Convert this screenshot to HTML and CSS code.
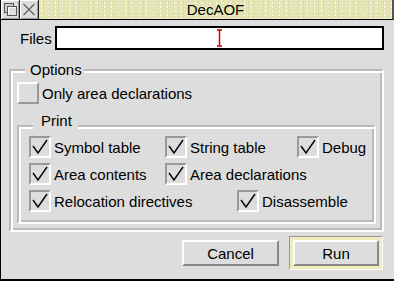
FILE: index.html
```html
<!DOCTYPE html>
<html lang="en">
<head>
  <meta charset="UTF-8">
  <title>DecAOF</title>
  <link rel="stylesheet" href="styles.css">
</head>
<body>

  <div class="window">
    <div class="titlebar">
      <span class="tool">
        <svg viewBox="0 0 18 19" width="18" height="19">
          <rect x="3.5" y="3.5" width="9" height="9" fill="#ccc" stroke="#555"/>
          <rect x="6.5" y="6.5" width="9" height="9" fill="#ddd" stroke="#555"/>
          <path d="M7.5 14.5v-7h7" fill="none" stroke="#fff"/>
        </svg>
      </span>
      <span class="tool">
        <svg viewBox="0 0 18 19" width="18" height="19">
          <path d="M3.5 4l11 11M14.5 4l-11 11" stroke="#666" stroke-width="1.4"/>
        </svg>
      </span>
      <div class="title">DecAOF</div>
    </div>

    <div class="pane">
      <div class="files-row">
        <span class="files-label">Files</span>
        <div class="field">
          <svg class="caret" viewBox="0 0 5 18" width="5" height="18">
            <path d="M0 1h5M2.5 1v16M0 17h5" stroke="#d00" stroke-width="1.5"/>
          </svg>
        </div>
      </div>

      <fieldset class="frame options">
        <legend>Options</legend>
        <label class="opt"><span class="box"></span>Only area declarations</label>

        <fieldset class="frame print">
          <legend>Print</legend>
          <div class="print-grid">
            <label class="opt"><span class="box on"><svg viewBox="0 0 18 18"><path d="M2 8l5 7 9-13"/></svg></span>Symbol table</label>
            <label class="opt span2"><span class="box on"><svg viewBox="0 0 18 18"><path d="M2 8l5 7 9-13"/></svg></span>String table</label>
            <label class="opt"><span class="box on"><svg viewBox="0 0 18 18"><path d="M2 8l5 7 9-13"/></svg></span>Debug</label>

            <label class="opt"><span class="box on"><svg viewBox="0 0 18 18"><path d="M2 8l5 7 9-13"/></svg></span>Area contents</label>
            <label class="opt span3"><span class="box on"><svg viewBox="0 0 18 18"><path d="M2 8l5 7 9-13"/></svg></span>Area declarations</label>

            <label class="opt span2"><span class="box on"><svg viewBox="0 0 18 18"><path d="M2 8l5 7 9-13"/></svg></span>Relocation directives</label>
            <label class="opt span2"><span class="box on"><svg viewBox="0 0 18 18"><path d="M2 8l5 7 9-13"/></svg></span>Disassemble</label>
          </div>
        </fieldset>
      </fieldset>

      <div class="actions">
        <button class="btn">Cancel</button>
        <div class="ring"><button class="btn run">Run</button></div>
      </div>
    </div>
  </div>

</body>
</html>
```

FILE: styles.css
```css
body {
  margin: 0;
  font-family: "Liberation Sans", Arial, sans-serif;
  font-size: 15px;
  color: #000;
  background: #ddd;
}

.window {
  width: 394px;
  height: 281px;
  box-sizing: border-box;
  border-left: 1px solid #000;
  border-bottom: 2px solid #000;
  background: #ddd;
}

/* title bar, with a speckled cream fill */
.titlebar {
  display: flex;
  height: 19px;
  border-bottom: 1px solid #000;
  border-right: 2px solid #555;
  background:
    radial-gradient(circle, #c8c8c0 0.7px, transparent 1px) 0 0 / 5px 3px,
    radial-gradient(circle, #fafae6 0.7px, transparent 1px) 2px 1px / 7px 4px,
    #e6e6b4;
}

.tool {
  display: flex;
  width: 18px;
  height: 19px;
  border-right: 1px solid #222;
  background: #ddd;
  box-shadow: inset 1px 1px #fff, inset -1px -1px #999;
}

.title {
  flex: 1;
  text-align: center;
  line-height: 19px;
}

/* dialog body */
.pane {
  padding: 6px 10px 0 8px;
}

.files-row {
  display: flex;
  align-items: center;
  height: 24px;
}

.files-label {
  width: 35px;
  padding-left: 11px;
}

.field {
  display: flex;
  align-items: center;
  width: 329px;
  height: 24px;
  box-sizing: border-box;
  border: 2px solid #000;
  background: #fff;
  padding-left: 160px;
}

/* groove frames */
.frame {
  margin: 0;
  min-width: 0;
  border: 2px solid;
  border-color: #bbb #fff #fff #bbb;
  box-shadow: inset 2px 2px #fff, inset -2px -2px #bbb;
}

.frame > legend {
  line-height: 18px;
  background: #ddd;
}

.options {
  margin-top: 11px;
  padding: 3px 6px 6px;
}

.options > legend {
  margin-left: 8px;
  padding: 0 2px 0 5px;
}

.print {
  margin-top: 13px;
  padding: 1px 10px 10px;
}

.print > legend {
  margin-left: 4px;
  padding: 0 6px 0 8px;
  position: relative;
  top: -5px;
}

.print-grid {
  display: grid;
  grid-template-columns: 136px 72px 60px 1fr;
  grid-auto-rows: 22px;
  row-gap: 5px;
}

.span2 { grid-column: span 2; }
.span3 { grid-column: span 3; }

/* option boxes */
.opt {
  display: flex;
  align-items: center;
  gap: 3px;
  height: 22px;
  white-space: nowrap;
}

.box {
  flex: 0 0 22px;
  height: 22px;
  box-sizing: border-box;
  border: 2px solid;
  border-color: #fff #999 #999 #fff;
}

.box.on {
  border-color: #999 #fff #fff #999;
}

.box svg {
  display: block;
  width: 18px;
  height: 18px;
  fill: none;
  stroke: #000;
  stroke-width: 1.4;
}

/* buttons */
.actions {
  display: flex;
  justify-content: flex-end;
  align-items: center;
  gap: 10px;
  margin-top: 4px;
  padding-right: 1px;
}

.btn {
  width: 97px;
  height: 26px;
  padding: 0;
  border: 2px solid;
  border-color: #fff #888 #888 #fff;
  background: #ddd;
  font: inherit;
  color: #000;
}

.ring {
  padding: 3px;
  border: 1px solid;
  border-color: #999 #fff #fff #999;
  background: #eeeebb;
}

.btn.run {
  display: block;
  width: 86px;
}
```
